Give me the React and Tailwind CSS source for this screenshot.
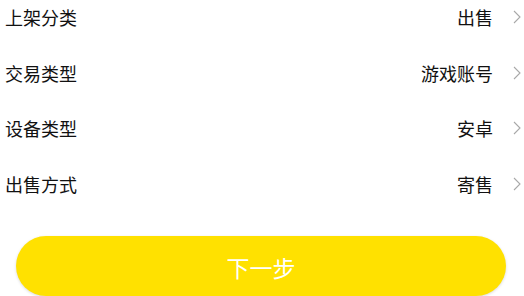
import React from "react";

const rows = [
  { label: "上架分类", value: "出售" },
  { label: "交易类型", value: "游戏账号" },
  { label: "设备类型", value: "安卓" },
  { label: "出售方式", value: "寄售" },
];

function Chevron() {
  return (
    <svg width="8" height="14" viewBox="0 0 8 14" className="ml-[20px]">
      <path d="M1 1 L7 7 L1 13" fill="none" stroke="#a8a8a8" strokeWidth="1.1" />
    </svg>
  );
}

export default function App() {
  return (
    <div
      className="w-[524px] h-[296px] overflow-hidden bg-white"
      style={{ fontFamily: '"Noto Sans CJK SC", "Noto Sans", sans-serif' }}
    >
      <div className="-mt-[10.5px] flex flex-col">
        {rows.map((r) => (
          <div key={r.label} className="h-[55.5px] flex items-center justify-between pl-[5px] pr-[3px]">
            <span className="text-[18px] text-[#111] leading-none">{r.label}</span>
            <div className="flex items-center">
              <span className="text-[18px] text-[#111] leading-none">{r.value}</span>
              <Chevron />
            </div>
          </div>
        ))}
      </div>
      <div className="mt-[24px] pl-[16px] pr-[18px]">
        <button className="w-full h-[60px] rounded-full bg-[#ffe100] text-white text-[23px] shadow-[0_1px_3px_rgba(0,0,0,0.15)] flex items-center justify-center pt-[4px]">
          下一步
        </button>
      </div>
    </div>
  );
}
